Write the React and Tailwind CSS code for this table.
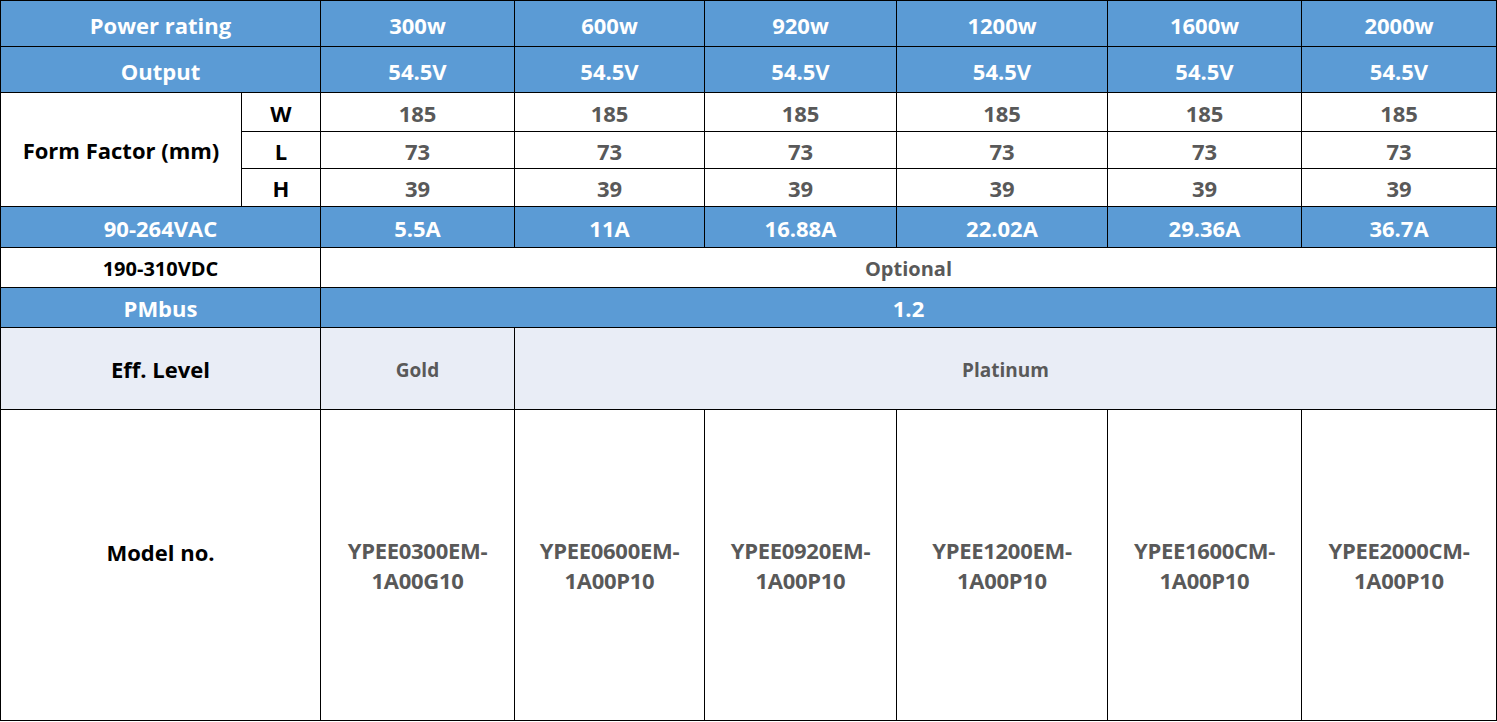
import React from "react";

const watts = ["300w", "600w", "920w", "1200w", "1600w", "2000w"];
const amps = ["5.5A", "11A", "16.88A", "22.02A", "29.36A", "36.7A"];
const models = [
  ["YPEE0300EM-", "1A00G10"],
  ["YPEE0600EM-", "1A00P10"],
  ["YPEE0920EM-", "1A00P10"],
  ["YPEE1200EM-", "1A00P10"],
  ["YPEE1600CM-", "1A00P10"],
  ["YPEE2000CM-", "1A00P10"],
];

const cell = "border border-black text-center align-middle p-0";
const blue = "bg-[#5b9bd5] text-white";
const val = "text-[#595959]";

export default function App() {
  return (
    <div
      className="bg-white w-[1497px] h-[722px] overflow-hidden"
      style={{ fontFamily: "'Open Sans', Lato, sans-serif" }}
    >
      <table className="table-fixed border-collapse w-[1496px] font-bold text-[22px] leading-none border border-[#7f7f7f]">
        <colgroup>
          <col className="w-[241px]" />
          <col className="w-[79px]" />
          <col className="w-[194px]" />
          <col className="w-[190px]" />
          <col className="w-[192px]" />
          <col className="w-[211px]" />
          <col className="w-[194px]" />
          <col className="w-[195px]" />
        </colgroup>
        <tbody>
          <tr className="h-[46px]">
            <td colSpan={2} className={`${cell} ${blue} pt-[3px]`}>Power rating</td>
            {watts.map((w) => (
              <td key={w} className={`${cell} ${blue} pt-[3px]`}>{w}</td>
            ))}
          </tr>
          <tr className="h-[46px]">
            <td colSpan={2} className={`${cell} ${blue} pt-[2px]`}>Output</td>
            {watts.map((w) => (
              <td key={w} className={`${cell} ${blue} pt-[2px]`}>54.5V</td>
            ))}
          </tr>
          <tr className="h-[39px]">
            <td rowSpan={3} className={`${cell} text-black`}>Form Factor (mm)</td>
            <td className={`${cell} text-black pt-[1px]`}>W</td>
            {watts.map((w) => (
              <td key={w} className={`${cell} ${val} pt-[1px]`}>185</td>
            ))}
          </tr>
          <tr className="h-[37px]">
            <td className={`${cell} text-black pt-[1px]`}>L</td>
            {watts.map((w) => (
              <td key={w} className={`${cell} ${val} pt-[1px]`}>73</td>
            ))}
          </tr>
          <tr className="h-[38px]">
            <td className={`${cell} text-black pt-[1px]`}>H</td>
            {watts.map((w) => (
              <td key={w} className={`${cell} ${val} pt-[1px]`}>39</td>
            ))}
          </tr>
          <tr className="h-[41px]">
            <td colSpan={2} className={`${cell} ${blue} pt-[1px]`}>90-264VAC</td>
            {amps.map((a) => (
              <td key={a} className={`${cell} ${blue} pt-[1px]`}>{a}</td>
            ))}
          </tr>
          <tr className="h-[40px]">
            <td colSpan={2} className={`${cell} text-black text-[20px] pt-[2px]`}>190-310VDC</td>
            <td colSpan={6} className={`${cell} ${val} text-[20px] pt-[2px]`}>Optional</td>
          </tr>
          <tr className="h-[40px]">
            <td colSpan={2} className={`${cell} ${blue} pt-[1px]`}>PMbus</td>
            <td colSpan={6} className={`${cell} ${blue} pt-[1px]`}>1.2</td>
          </tr>
          <tr className="h-[82px] bg-[#e9edf6]">
            <td colSpan={2} className={`${cell} text-black`}>Eff. Level</td>
            <td className={`${cell} ${val} text-[19px] pt-[3px]`}>Gold</td>
            <td colSpan={5} className={`${cell} ${val} text-[19px] pt-[3px]`}>Platinum</td>
          </tr>
          <tr className="h-[311px]">
            <td colSpan={2} className={`${cell} text-black pb-[26px]`}>Model no.</td>
            {models.map((m, i) => (
              <td key={i} className={`${cell} ${val} leading-[30px] tracking-[-0.3px]`}>
                {m[0]}
                <br />
                {m[1]}
              </td>
            ))}
          </tr>
        </tbody>
      </table>
    </div>
  );
}
